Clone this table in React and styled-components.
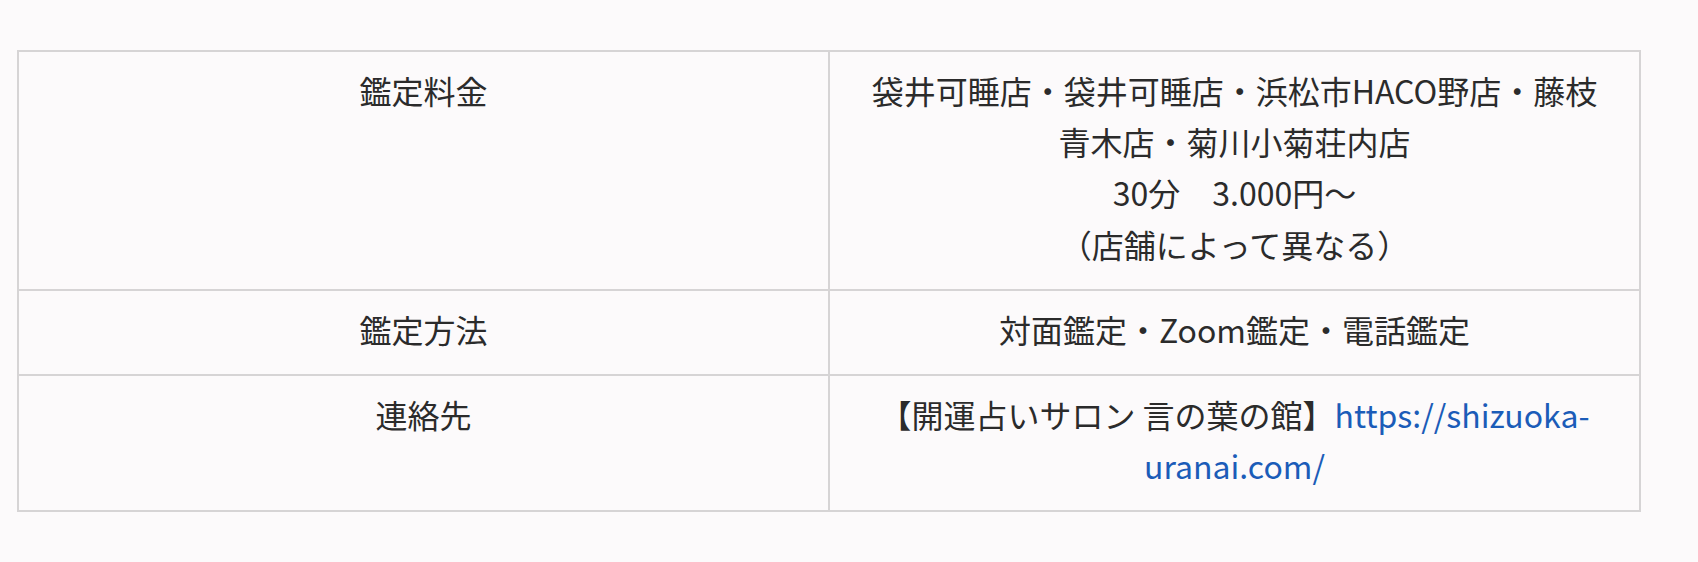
import React from 'react'
import styled, { createGlobalStyle } from 'styled-components'

const GlobalStyle = createGlobalStyle`
    html, body {
        margin: 0;
        padding: 0;
        background: #fcfafb;
    }
    body {
        font-family: "Noto Sans CJK JP", "Noto Sans", sans-serif;
        color: #2b2b2b;
    }
`

const PageStyled = styled.div`
    padding: 50px 0 40px 17px;
`

const TableStyled = styled.table`
    width: 1624px;
    border-collapse: collapse;
    table-layout: fixed;
    font-size: 32px;
    line-height: 1.6;
`

const CellStyled = styled.td`
    width: 50%;
    border: 2px solid #d6d4d5;
    padding: 13px 32px 19px;
    text-align: center;
    vertical-align: top;
    word-break: normal;
`

const LinkStyled = styled.a`
    color: #1b5cb8;
    text-decoration: none;
`

const rows = [
    {
        label: '鑑定料金',
        value: (
            <>
                袋井可睡店・袋井可睡店・浜松市HACO野店・藤枝青木店・菊川小菊荘内店
                <br />
                30分　3.000円～
                <br />
                （店舗によって異なる）
            </>
        ),
    },
    {
        label: '鑑定方法',
        value: '対面鑑定・Zoom鑑定・電話鑑定',
    },
    {
        label: '連絡先',
        value: (
            <>
                【開運占いサロン 言の葉の館】
                <LinkStyled href="#">https://shizuoka-uranai.com/</LinkStyled>
            </>
        ),
    },
]

export default function App() {
    return (
        <>
            <GlobalStyle />
            <PageStyled>
                <TableStyled>
                    <tbody>
                        {rows.map((row) => (
                            <tr key={row.label}>
                                <CellStyled>{row.label}</CellStyled>
                                <CellStyled>{row.value}</CellStyled>
                            </tr>
                        ))}
                    </tbody>
                </TableStyled>
            </PageStyled>
        </>
    )
}
